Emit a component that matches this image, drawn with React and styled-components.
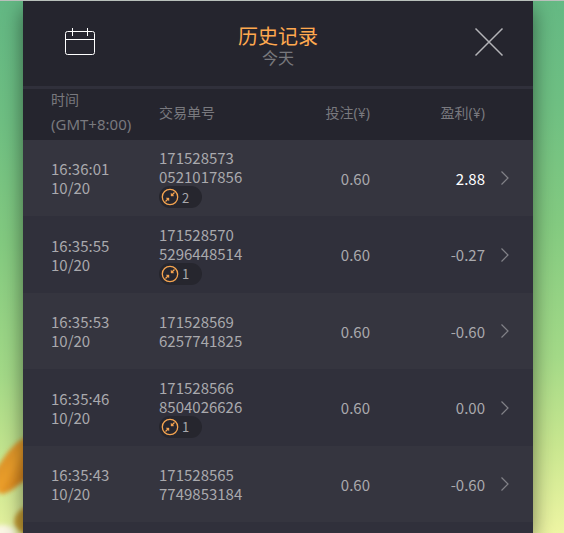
import React from 'react';
import styled, { createGlobalStyle } from 'styled-components';

const GlobalStyle = createGlobalStyle`
	* {
		box-sizing: border-box;
	}
	body {
		margin: 0;
		background: #30303c;
		font-family: "Noto Sans CJK SC", "Noto Sans", sans-serif;
	}
`;

const Page = styled.div`
	position: relative;
	height: 100vh;
	overflow: hidden;
	padding: 0 31px 0 23px;
	border-top: 1px solid #b9c0bb;
	background: linear-gradient(178deg, #63b884 0%, #6fc083 22%, #84cb81 44%, #a4da88 68%, #c9e790 84%, #eff6a4 100%);
`;

const Leaves = styled.svg`
	position: absolute;
	left: 0;
	bottom: 0;
`;

const Panel = styled.main`
	position: relative;
	min-height: 100%;
	background: #30303b;
	box-shadow: 0 8px 20px rgba(0, 0, 0, 0.5);
`;

const Header = styled.header`
	display: grid;
	grid-template-columns: 1fr auto 1fr;
	align-items: center;
	height: 88px;
	padding: 0 24px 4px;
	background: #25252e;
	border-bottom: 3px solid #30303b;
`;

const Heading = styled.div`
	text-align: center;
	padding-top: 9px;
`;

const Title = styled.h1`
	margin: 0;
	font-size: 20px;
	font-weight: 400;
	line-height: 22px;
	color: #ffa94f;
`;

const Subtitle = styled.p`
	margin: 0;
	font-size: 16px;
	line-height: 20px;
	color: #78787d;
`;

const IconButton = styled.button`
	display: flex;
	align-items: center;
	justify-content: center;
	justify-self: ${props => props.$side || 'start'};
	width: ${props => props.$width || 40}px;
	padding: 0;
	border: 0;
	background: none;
	color: ${props => props.$color || 'white'};
	cursor: pointer;
`;

const Table = styled.table`
	width: 100%;
	table-layout: fixed;
	border-collapse: collapse;
`;

const Th = styled.th`
	height: 51px;
	padding: 0 0 5px ${props => props.$indent || 0}px;
	width: ${props => props.$width || 'auto'};
	background: #25252e;
	color: #79797e;
	font-family: "Noto Sans", "Noto Sans CJK SC", sans-serif;
	font-size: 14px;
	font-weight: 400;
	line-height: 21px;
	text-align: ${props => props.$align || 'left'};
`;

const Zone = styled.span`
	display: block;
	margin-top: 4px;
	font-size: 15px;
`;

const Row = styled.tr`
	height: 76px;
	background: #35353f;
	&:nth-child(even) {
		height: 77px;
		background: #30303b;
	}
`;

const Td = styled.td`
	padding: 0 0 0 ${props => props.$indent || 0}px;
	color: ${props => props.$color || '#a9a9ad'};
	font-size: 15px;
	line-height: 19px;
	text-align: ${props => props.$align || 'left'};
`;

const Badge = styled.span`
	display: flex;
	align-items: center;
	gap: 3px;
	width: 43px;
	height: 22px;
	padding-left: 2px;
	border-radius: 11px;
	background: #26262e;
	font-size: 13px;
`;

const CalendarIcon = () => (
	<svg width="32" height="30" viewBox="0 0 32 30" fill="none" stroke="currentColor">
		<rect x="1.5" y="4.5" width="29" height="23" rx="2" />
		<path d="M1 12.5H31M8.5 1V9M23.5 1V9" />
	</svg>
);

const CloseIcon = () => (
	<svg width="30" height="30" viewBox="0 0 30 30" fill="none" stroke="currentColor" strokeWidth="1.5">
		<path d="M1.5 1.5L28.5 28.5M28.5 1.5L1.5 28.5" />
	</svg>
);

const ChevronIcon = () => (
	<svg width="10" height="16" viewBox="0 0 10 16" fill="none" stroke="currentColor" strokeWidth="1.2">
		<path d="M1.5 1.5L8 8L1.5 14.5" />
	</svg>
);

const CollapseIcon = () => (
	<svg width="18" height="18" viewBox="0 0 18 18" fill="none" stroke="#f5a450" strokeWidth="1.3">
		<circle cx="9" cy="9" r="7.7" />
		<path d="M13.5 4.5L11 7M4.5 13.5L7 11" />
		<path d="M10 5.2V8H12.8ZM8 12.8V10H5.2Z" fill="#f5a450" stroke="#f5a450" strokeWidth="0.4" />
	</svg>
);

const records = [
	{ time: '16:36:01', date: '10/20', id: ['171528573', '0521017856'], count: 2, bet: '0.60', profit: '2.88' },
	{ time: '16:35:55', date: '10/20', id: ['171528570', '5296448514'], count: 1, bet: '0.60', profit: '-0.27' },
	{ time: '16:35:53', date: '10/20', id: ['171528569', '6257741825'], bet: '0.60', profit: '-0.60' },
	{ time: '16:35:46', date: '10/20', id: ['171528566', '8504026626'], count: 1, bet: '0.60', profit: '0.00' },
	{ time: '16:35:43', date: '10/20', id: ['171528565', '7749853184'], bet: '0.60', profit: '-0.60' },
];

const Record = ({ item }) => (
	<Row>
		<Td $indent={28}>{item.time}<br />{item.date}</Td>
		<Td>
			{item.id[0]}<br />{item.id[1]}
			{item.count && <Badge><CollapseIcon />{item.count}</Badge>}
		</Td>
		<Td $align="right">{item.bet}</Td>
		<Td $align="right" $color={parseFloat(item.profit) > 0 ? 'white' : undefined}>{item.profit}</Td>
		<Td $indent={14}>
			<IconButton $width={11} $color="#828288" aria-label="详情"><ChevronIcon /></IconButton>
		</Td>
	</Row>
);

const App = () => (
	<Page>
		<GlobalStyle />
		<Leaves width="60" height="110" viewBox="0 0 60 110" aria-hidden="true">
			<defs>
				<filter id="soft" x="-30%" y="-30%" width="160%" height="160%">
					<feGaussianBlur stdDeviation="2" />
				</filter>
				<linearGradient id="leaf" x1="0" y1="0" x2="1" y2="1">
					<stop offset="0" stopColor="#c98524" />
					<stop offset="0.5" stopColor="#eda02b" />
					<stop offset="1" stopColor="#c56c12" />
				</linearGradient>
			</defs>
			<g filter="url(#soft)">
				<ellipse cx="2" cy="110" rx="13" ry="8" fill="#fbf7e4" />
				<path d="M-4 46C4 36 10 20 32 11V54C20 58 12 71 0 71L-4 66Z" fill="url(#leaf)" />
				<path d="M30 82C18 86 12 94 15 103C18 108 24 112 30 112Z" fill="#c79f36" />
			</g>
		</Leaves>
		<Panel>
			<Header>
				<IconButton $width={66} aria-label="日历"><CalendarIcon /></IconButton>
				<Heading>
					<Title>历史记录</Title>
					<Subtitle>今天</Subtitle>
				</Heading>
				<IconButton $side="end" $color="#b4b4b8" aria-label="关闭"><CloseIcon /></IconButton>
			</Header>
			<Table>
				<thead>
					<tr>
						<Th $width="136px" $indent={28}>时间<Zone>(GMT+8:00)</Zone></Th>
						<Th>交易单号</Th>
						<Th $width="100px" $align="right">投注(¥)</Th>
						<Th $width="115px" $align="right">盈利(¥)</Th>
						<Th $width="48px" />
					</tr>
				</thead>
				<tbody>
					{records.map(item => <Record key={item.time} item={item} />)}
				</tbody>
			</Table>
		</Panel>
	</Page>
);

export default App;
